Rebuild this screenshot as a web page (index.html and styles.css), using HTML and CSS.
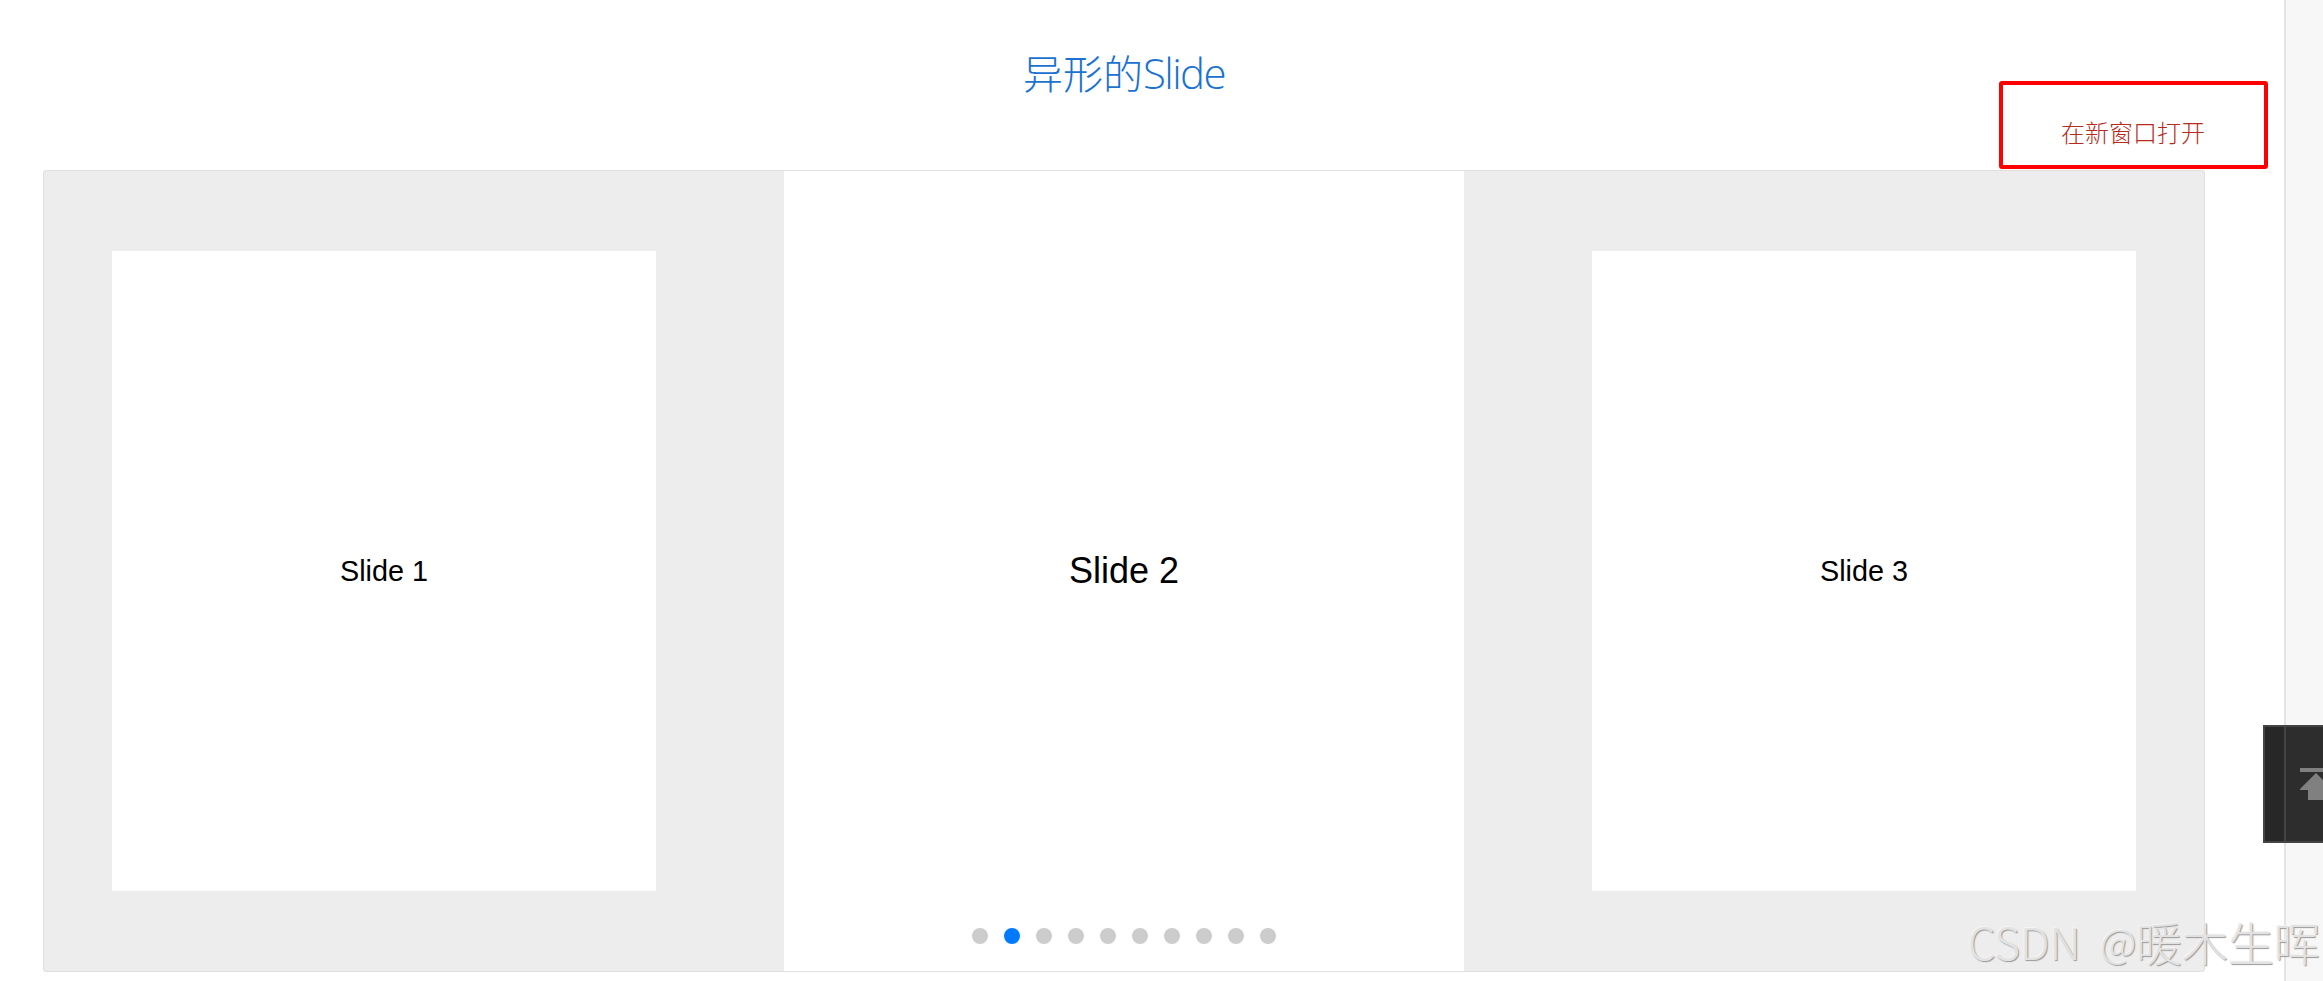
FILE: index.html
```html
<!DOCTYPE html>
<html lang="zh-CN">
<head>
  <meta charset="UTF-8">
  <title>异形的Slide</title>
  <link rel="stylesheet" href="styles.css">
</head>
<body>
  <div class="page">
    <div class="main">
      <h2 class="demo-title">异形的<span class="demo-title-en">Slide</span></h2>
      <div class="demo-bar">
        <a class="open-link" href="#">在新窗口打开</a>
        <div class="mark-box"></div>
      </div>
      <!-- Swiper -->
      <div class="swiper">
        <div class="swiper-wrapper">
          <div class="slide">Slide 1</div>
          <div class="slide active">Slide 2</div>
          <div class="slide">Slide 3</div>
        </div>
        <div class="pagination">
          <span class="bullet"></span>
          <span class="bullet active"></span>
          <span class="bullet"></span>
          <span class="bullet"></span>
          <span class="bullet"></span>
          <span class="bullet"></span>
          <span class="bullet"></span>
          <span class="bullet"></span>
          <span class="bullet"></span>
          <span class="bullet"></span>
        </div>
      </div>
    </div>
    <div class="side"></div>
  </div>
  <!-- Back to top -->
  <div class="to-top">
    <svg width="32" height="32" viewBox="0 0 32 32" fill="#808080">
      <path d="M0 0h32v4H0z"/>
      <path d="M16 5L32 21v1h-8v10H8V22H0v-1z"/>
    </svg>
  </div>
  <div class="watermark"><span class="wm-name">CSDN</span><span class="wm-at">@</span><span class="wm-user">暖木生晖</span></div>
</body>
</html>
```
FILE: styles.css
```css
* {
  box-sizing: border-box;
}
body {
  margin: 0;
  height: 981px;
  position: relative;
  overflow: hidden;
  background: #fff;
  font-family: "Open Sans", "Noto Sans CJK SC", sans-serif;
}
.page {
  display: flex;
  height: 981px;
}
.main {
  width: 2284px;
  padding: 42px 79px 0 43px;
}
.side {
  flex: 1;
  background: #f7f7f7;
  border-left: 2px solid #e4e4e4;
}
.demo-title {
  margin: 0;
  height: 60px;
  line-height: 60px;
  text-align: center;
  font-family: "Noto Sans CJK SC", sans-serif;
  font-size: 40px;
  font-weight: 300;
  color: #1b72d0;
}
.demo-title-en {
  font-family: "Open Sans", sans-serif;
  font-size: 42px;
  letter-spacing: -1.6px;
}
.demo-bar {
  position: relative;
  height: 68px;
  padding-top: 12px;
  display: flex;
  justify-content: flex-end;
}
.open-link {
  height: 36px;
  line-height: 36px;
  font-family: "Noto Sans CJK SC", sans-serif;
  font-size: 24px;
  font-weight: 300;
  color: #b52b1c;
  text-decoration: none;
}
.mark-box {
  position: absolute;
  right: -63px;
  top: -21px;
  width: 269px;
  height: 88px;
  border: 4px solid #f00;
  border-radius: 3px;
}
/* Swiper */
.swiper {
  position: relative;
  height: 802px;
  border: 1px solid #dfdfdf;
  border-radius: 3px;
  background: #ededed;
}
.swiper-wrapper {
  height: 800px;
  display: flex;
  justify-content: center;
  gap: 60px;
}
.slide {
  flex: none;
  width: 680px;
  height: 800px;
  display: flex;
  align-items: center;
  justify-content: center;
  background: #fff;
  color: #000;
  font-family: "Liberation Sans", Arial, sans-serif;
  font-size: 36px;
  transform: scale(0.8);
}
.slide.active {
  transform: none;
}
.pagination {
  position: absolute;
  left: 0;
  right: 0;
  bottom: 27px;
  display: flex;
  justify-content: center;
  gap: 16px;
}
.bullet {
  width: 16px;
  height: 16px;
  border-radius: 50%;
  background: #ccc;
}
.bullet.active {
  background: #007aff;
}
.to-top {
  position: absolute;
  left: 2263px;
  top: 725px;
  width: 104px;
  height: 118px;
  padding: 41px 0 0 35px;
  border: 2px solid #444;
  background: linear-gradient(90deg, #272727 19px, #444 19px, #444 21px, #2d2d2d 21px);
}
.watermark {
  position: absolute;
  left: 1968px;
  top: 908px;
  display: flex;
  line-height: 66px;
  white-space: nowrap;
  font-family: "Noto Sans CJK SC", sans-serif;
  font-weight: 300;
  font-size: 44px;
  color: #e2e2e2;
  text-shadow: 1px 1px 1px #999, -1px -1px 0 #f4f4f4;
}
.wm-name {
  width: 132px;
}
.wm-at {
  width: 36px;
  font-size: 40px;
}
.wm-user {
  font-size: 46px;
}
```
